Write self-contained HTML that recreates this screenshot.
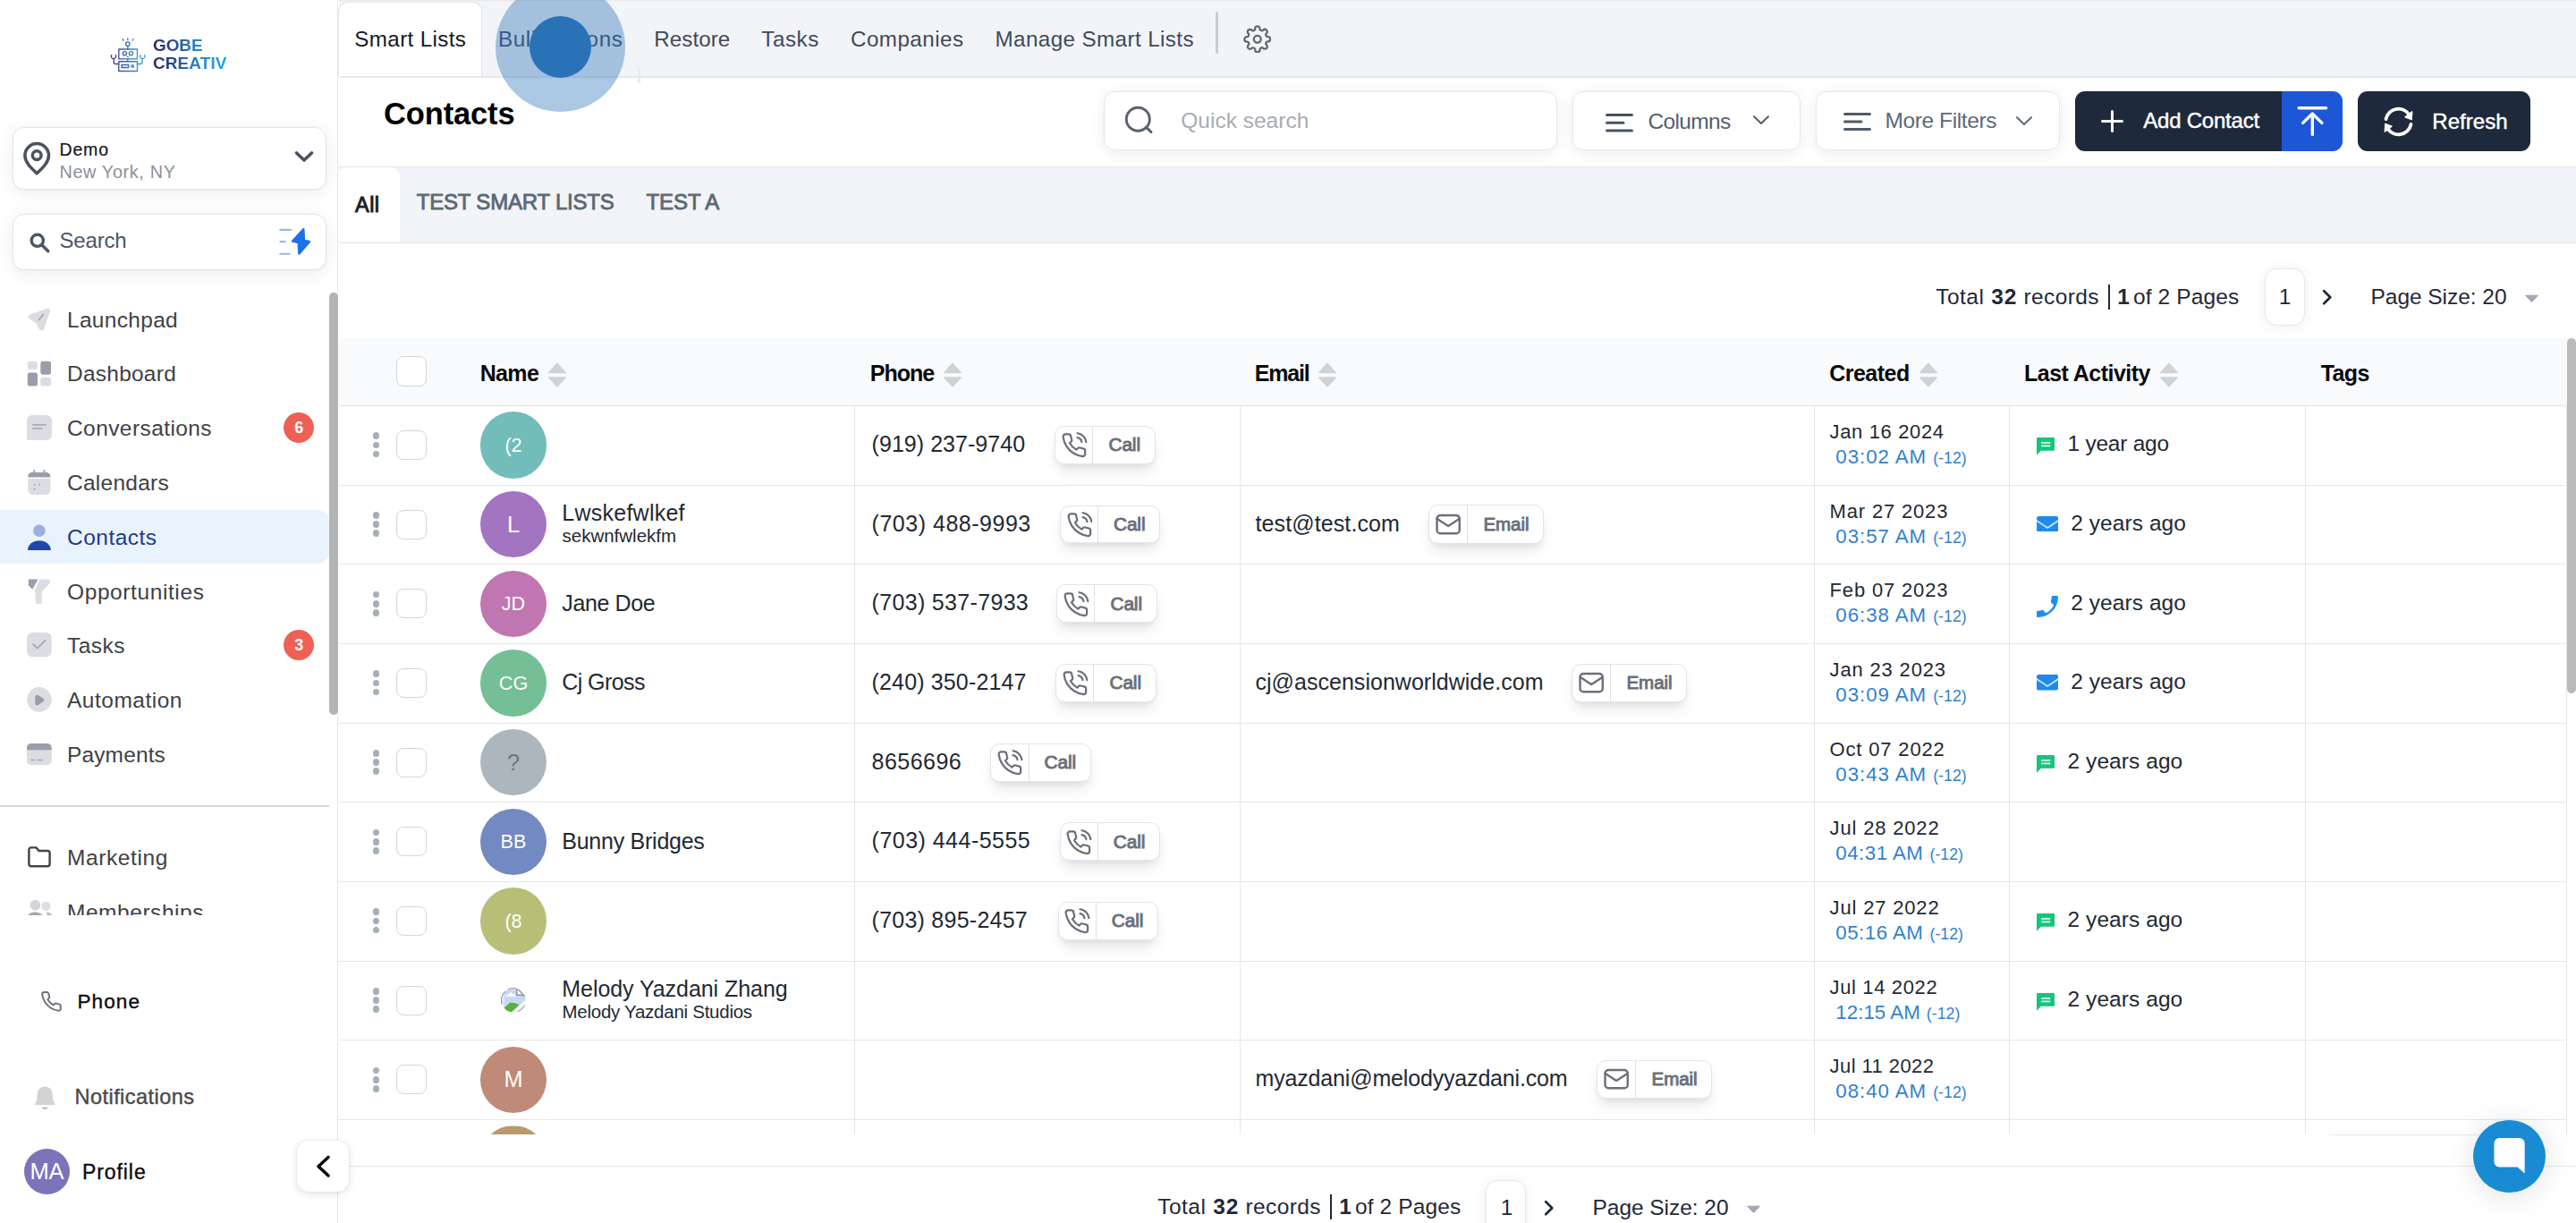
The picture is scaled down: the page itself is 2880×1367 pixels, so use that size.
<!DOCTYPE html>
<html lang="en"><head><meta charset="utf-8"><title>Contacts</title>
<style>
html,body{margin:0;padding:0;background:#fff}
#p{width:2880px;height:1367px;overflow:hidden;position:relative;background:#fff;font-family:'Liberation Sans', sans-serif}
#b div,#i svg,#t span{position:absolute}
#b div{box-sizing:border-box}
#t span{white-space:pre;line-height:1}
</style></head>
<body>
<div id="p">
<div id="b">
<div style="left:376.9px;top:0px;width:1.3px;height:1367px;background:#e6e7e9"></div>
<div style="left:13.9px;top:141.5px;width:351.2px;height:70.2px;background:#fff;border:1.5px solid #e4e6ea;border-radius:13px;box-shadow:0 3px 20px rgba(16,24,40,.075),0 1px 3px rgba(16,24,40,.04)"></div>
<div style="left:13.9px;top:239px;width:351.2px;height:63px;background:#fff;border:1.5px solid #e4e6ea;border-radius:13px;box-shadow:0 3px 20px rgba(16,24,40,.075),0 1px 3px rgba(16,24,40,.04)"></div>
<div style="left:-12px;top:570px;width:379.5px;height:60.2px;background:#e9f3fe;border-radius:13px"></div>
<div style="left:0px;top:900px;width:368px;height:1.5px;background:#d5d7db"></div>
<div style="left:368.3px;top:327px;width:9.4px;height:471.5px;background:#b4b4b4;border-radius:5px"></div>
<div style="left:317.2px;top:461.3px;width:34px;height:34px;background:#ee6055;border-radius:50%"></div>
<div style="left:317.2px;top:704.4px;width:34px;height:34px;background:#ee6055;border-radius:50%"></div>
<div style="left:26.8px;top:1283.7px;width:51.4px;height:51.4px;background:#7c74ba;border-radius:50%"></div>
<div style="left:378.5px;top:0px;width:2501.5px;height:86.5px;background:#f3f4f7;border-bottom:2px solid #e6e8ec;border-top:1.5px solid #e6e8ec"></div>
<div style="left:378.4px;top:1.5px;width:161px;height:83.5px;background:#fff;border-radius:11px 11px 0 0;border:1.2px solid #e4e6e9;border-bottom:none"></div>
<div style="left:1359px;top:13px;width:3px;height:47px;background:#c9cdd3;border-radius:1.5px"></div>
<div style="left:713px;top:76px;width:2.5px;height:17px;background:#e8eaee"></div>
<div style="left:378.5px;top:185.5px;width:2501.5px;height:86px;background:#f3f4f8;border-top:1.5px solid #e5e7eb;border-bottom:1.5px solid #e5e7eb"></div>
<div style="left:378.4px;top:187.3px;width:69px;height:82.7px;background:#fff;border-radius:11px 11px 0 0"></div>
<div style="left:1234.2px;top:101.8px;width:506.5px;height:66.5px;background:#fff;border:1.5px solid #e5e7eb;border-radius:12px;box-shadow:0 3px 16px rgba(16,24,40,.075)"></div>
<div style="left:1757.5px;top:101.8px;width:255.3px;height:66.5px;background:#fff;border:1.5px solid #e5e7eb;border-radius:12px;box-shadow:0 3px 16px rgba(16,24,40,.075)"></div>
<div style="left:2030.2px;top:101.8px;width:273px;height:66.5px;background:#fff;border:1.5px solid #e5e7eb;border-radius:12px;box-shadow:0 3px 16px rgba(16,24,40,.075)"></div>
<div style="left:2319.8px;top:101.6px;width:231.5px;height:67.4px;background:#1e293b;border-radius:11px 0 0 11px"></div>
<div style="left:2550.8px;top:101.6px;width:67.8px;height:67.4px;background:#1d57d8;border-radius:0 11px 11px 0"></div>
<div style="left:2636px;top:101.6px;width:193px;height:67.4px;background:#1e293b;border-radius:11px"></div>
<div style="left:2531.6px;top:300px;width:45.8px;height:63.5px;background:#fff;border:1.5px solid #e5e7eb;border-radius:13px;box-shadow:0 1px 14px rgba(16,24,40,.07)"></div>
<div style="left:1660.6px;top:1318.6px;width:45.8px;height:63.5px;background:#fff;border:1.5px solid #e5e7eb;border-radius:13px;box-shadow:0 1px 14px rgba(16,24,40,.07)"></div>
<div style="left:378.5px;top:378.3px;width:2491.5px;height:75.5px;background:#f9fafb;border-bottom:1.3px solid #e2e4e8"></div>
<div style="left:378.5px;top:542px;width:2491.5px;height:1px;background:#e4e6e9"></div>
<div style="left:378.5px;top:630px;width:2491.5px;height:1px;background:#e4e6e9"></div>
<div style="left:378.5px;top:719px;width:2491.5px;height:1px;background:#e4e6e9"></div>
<div style="left:378.5px;top:808px;width:2491.5px;height:1px;background:#e4e6e9"></div>
<div style="left:378.5px;top:896px;width:2491.5px;height:1px;background:#e4e6e9"></div>
<div style="left:378.5px;top:985px;width:2491.5px;height:1px;background:#e4e6e9"></div>
<div style="left:378.5px;top:1074px;width:2491.5px;height:1px;background:#e4e6e9"></div>
<div style="left:378.5px;top:1162px;width:2491.5px;height:1px;background:#e4e6e9"></div>
<div style="left:378.5px;top:1251px;width:2491.5px;height:1px;background:#e4e6e9"></div>
<div style="left:955px;top:454px;width:1px;height:815px;background:#e4e6e9"></div>
<div style="left:1386px;top:454px;width:1px;height:815px;background:#e4e6e9"></div>
<div style="left:2028px;top:454px;width:1px;height:815px;background:#e4e6e9"></div>
<div style="left:2246px;top:454px;width:1px;height:815px;background:#e4e6e9"></div>
<div style="left:2577px;top:454px;width:1px;height:815px;background:#e4e6e9"></div>
<div style="left:2869px;top:454px;width:1px;height:815px;background:#e4e6e9"></div>
<div style="left:443px;top:398px;width:34px;height:34px;background:#fff;border:1.5px solid #d3d6db;border-radius:8px"></div>
<div style="left:2870.4px;top:378px;width:9.6px;height:396.5px;background:#bababa;border-radius:5px 5px 5px 5px"></div>
<div style="left:416.7px;top:483.39px;width:7.6px;height:7.6px;background:#a3b0b7;border-radius:50%"></div>
<div style="left:416.7px;top:493.59px;width:7.6px;height:7.6px;background:#a3b0b7;border-radius:50%"></div>
<div style="left:416.7px;top:503.69px;width:7.6px;height:7.6px;background:#a3b0b7;border-radius:50%"></div>
<div style="left:443px;top:480.89px;width:33.8px;height:33px;background:#fff;border:1.5px solid #d3d6db;border-radius:8px"></div>
<div style="left:536.75px;top:460.29px;width:74.4px;height:74.4px;background:#72bcba;border-radius:50%"></div>
<div style="left:416.7px;top:572.07px;width:7.6px;height:7.6px;background:#a3b0b7;border-radius:50%"></div>
<div style="left:416.7px;top:582.27px;width:7.6px;height:7.6px;background:#a3b0b7;border-radius:50%"></div>
<div style="left:416.7px;top:592.37px;width:7.6px;height:7.6px;background:#a3b0b7;border-radius:50%"></div>
<div style="left:443px;top:569.5699999999999px;width:33.8px;height:33px;background:#fff;border:1.5px solid #d3d6db;border-radius:8px"></div>
<div style="left:536.75px;top:548.9699999999999px;width:74.4px;height:74.4px;background:#a374bf;border-radius:50%"></div>
<div style="left:416.7px;top:660.7500000000001px;width:7.6px;height:7.6px;background:#a3b0b7;border-radius:50%"></div>
<div style="left:416.7px;top:670.95px;width:7.6px;height:7.6px;background:#a3b0b7;border-radius:50%"></div>
<div style="left:416.7px;top:681.0500000000001px;width:7.6px;height:7.6px;background:#a3b0b7;border-radius:50%"></div>
<div style="left:443px;top:658.25px;width:33.8px;height:33px;background:#fff;border:1.5px solid #d3d6db;border-radius:8px"></div>
<div style="left:536.75px;top:637.65px;width:74.4px;height:74.4px;background:#c076b1;border-radius:50%"></div>
<div style="left:416.7px;top:749.4300000000002px;width:7.6px;height:7.6px;background:#a3b0b7;border-radius:50%"></div>
<div style="left:416.7px;top:759.6300000000001px;width:7.6px;height:7.6px;background:#a3b0b7;border-radius:50%"></div>
<div style="left:416.7px;top:769.7300000000001px;width:7.6px;height:7.6px;background:#a3b0b7;border-radius:50%"></div>
<div style="left:443px;top:746.9300000000001px;width:33.8px;height:33px;background:#fff;border:1.5px solid #d3d6db;border-radius:8px"></div>
<div style="left:536.75px;top:726.33px;width:74.4px;height:74.4px;background:#74bf95;border-radius:50%"></div>
<div style="left:416.7px;top:838.1100000000001px;width:7.6px;height:7.6px;background:#a3b0b7;border-radius:50%"></div>
<div style="left:416.7px;top:848.3100000000001px;width:7.6px;height:7.6px;background:#a3b0b7;border-radius:50%"></div>
<div style="left:416.7px;top:858.4100000000001px;width:7.6px;height:7.6px;background:#a3b0b7;border-radius:50%"></div>
<div style="left:443px;top:835.61px;width:33.8px;height:33px;background:#fff;border:1.5px solid #d3d6db;border-radius:8px"></div>
<div style="left:536.75px;top:815.01px;width:74.4px;height:74.4px;background:#adb5bd;border-radius:50%"></div>
<div style="left:416.7px;top:926.7900000000001px;width:7.6px;height:7.6px;background:#a3b0b7;border-radius:50%"></div>
<div style="left:416.7px;top:936.99px;width:7.6px;height:7.6px;background:#a3b0b7;border-radius:50%"></div>
<div style="left:416.7px;top:947.09px;width:7.6px;height:7.6px;background:#a3b0b7;border-radius:50%"></div>
<div style="left:443px;top:924.29px;width:33.8px;height:33px;background:#fff;border:1.5px solid #d3d6db;border-radius:8px"></div>
<div style="left:536.75px;top:903.6899999999999px;width:74.4px;height:74.4px;background:#7389c1;border-radius:50%"></div>
<div style="left:416.7px;top:1015.47px;width:7.6px;height:7.6px;background:#a3b0b7;border-radius:50%"></div>
<div style="left:416.7px;top:1025.67px;width:7.6px;height:7.6px;background:#a3b0b7;border-radius:50%"></div>
<div style="left:416.7px;top:1035.77px;width:7.6px;height:7.6px;background:#a3b0b7;border-radius:50%"></div>
<div style="left:443px;top:1012.9699999999999px;width:33.8px;height:33px;background:#fff;border:1.5px solid #d3d6db;border-radius:8px"></div>
<div style="left:536.75px;top:992.3699999999999px;width:74.4px;height:74.4px;background:#b7bf77;border-radius:50%"></div>
<div style="left:416.7px;top:1104.1499999999999px;width:7.6px;height:7.6px;background:#a3b0b7;border-radius:50%"></div>
<div style="left:416.7px;top:1114.35px;width:7.6px;height:7.6px;background:#a3b0b7;border-radius:50%"></div>
<div style="left:416.7px;top:1124.4499999999998px;width:7.6px;height:7.6px;background:#a3b0b7;border-radius:50%"></div>
<div style="left:443px;top:1101.6499999999999px;width:33.8px;height:33px;background:#fff;border:1.5px solid #d3d6db;border-radius:8px"></div>
<div style="left:416.7px;top:1192.8300000000002px;width:7.6px;height:7.6px;background:#a3b0b7;border-radius:50%"></div>
<div style="left:416.7px;top:1203.0300000000002px;width:7.6px;height:7.6px;background:#a3b0b7;border-radius:50%"></div>
<div style="left:416.7px;top:1213.13px;width:7.6px;height:7.6px;background:#a3b0b7;border-radius:50%"></div>
<div style="left:443px;top:1190.3300000000002px;width:33.8px;height:33px;background:#fff;border:1.5px solid #d3d6db;border-radius:8px"></div>
<div style="left:536.75px;top:1169.73px;width:74.4px;height:74.4px;background:#c08a78;border-radius:50%"></div>
<div style="left:536.75px;top:1258.4099999999999px;width:74.4px;height:74.4px;background:#b99a6b;border-radius:50%;clip-path:inset(0 0 64.5px 0)"></div>
<div style="left:1179.2px;top:475.99px;width:112.6px;height:42.8px;background:#fff;border:1.5px solid #e3e4e8;border-radius:10.5px;box-shadow:0 10px 15px -3px rgba(0,0,0,.105),0 4px 6px -2px rgba(0,0,0,.05)"></div>
<div style="left:1221.4px;top:476.99px;width:1.1px;height:41px;background:#e0e1e5"></div>
<div style="left:1184.7px;top:564.67px;width:112.6px;height:42.8px;background:#fff;border:1.5px solid #e3e4e8;border-radius:10.5px;box-shadow:0 10px 15px -3px rgba(0,0,0,.105),0 4px 6px -2px rgba(0,0,0,.05)"></div>
<div style="left:1226.9px;top:565.67px;width:1.1px;height:41px;background:#e0e1e5"></div>
<div style="left:1181.2px;top:653.35px;width:112.6px;height:42.8px;background:#fff;border:1.5px solid #e3e4e8;border-radius:10.5px;box-shadow:0 10px 15px -3px rgba(0,0,0,.105),0 4px 6px -2px rgba(0,0,0,.05)"></div>
<div style="left:1223.4px;top:654.35px;width:1.1px;height:41px;background:#e0e1e5"></div>
<div style="left:1180.2px;top:742.0300000000001px;width:112.6px;height:42.8px;background:#fff;border:1.5px solid #e3e4e8;border-radius:10.5px;box-shadow:0 10px 15px -3px rgba(0,0,0,.105),0 4px 6px -2px rgba(0,0,0,.05)"></div>
<div style="left:1222.4px;top:743.0300000000001px;width:1.1px;height:41px;background:#e0e1e5"></div>
<div style="left:1107.3px;top:830.71px;width:112.6px;height:42.8px;background:#fff;border:1.5px solid #e3e4e8;border-radius:10.5px;box-shadow:0 10px 15px -3px rgba(0,0,0,.105),0 4px 6px -2px rgba(0,0,0,.05)"></div>
<div style="left:1149.5px;top:831.71px;width:1.1px;height:41px;background:#e0e1e5"></div>
<div style="left:1184.5px;top:919.39px;width:112.6px;height:42.8px;background:#fff;border:1.5px solid #e3e4e8;border-radius:10.5px;box-shadow:0 10px 15px -3px rgba(0,0,0,.105),0 4px 6px -2px rgba(0,0,0,.05)"></div>
<div style="left:1226.7px;top:920.39px;width:1.1px;height:41px;background:#e0e1e5"></div>
<div style="left:1182.5px;top:1008.0699999999999px;width:112.6px;height:42.8px;background:#fff;border:1.5px solid #e3e4e8;border-radius:10.5px;box-shadow:0 10px 15px -3px rgba(0,0,0,.105),0 4px 6px -2px rgba(0,0,0,.05)"></div>
<div style="left:1224.7px;top:1009.0699999999999px;width:1.1px;height:41px;background:#e0e1e5"></div>
<div style="left:1597.1px;top:564.17px;width:128.6px;height:43.4px;background:#fff;border:1.5px solid #e3e4e8;border-radius:10.5px;box-shadow:0 10px 15px -3px rgba(0,0,0,.105),0 4px 6px -2px rgba(0,0,0,.05)"></div>
<div style="left:1639.9px;top:565.17px;width:1.1px;height:41.5px;background:#e0e1e5"></div>
<div style="left:1757.1999999999998px;top:741.5300000000001px;width:128.6px;height:43.4px;background:#fff;border:1.5px solid #e3e4e8;border-radius:10.5px;box-shadow:0 10px 15px -3px rgba(0,0,0,.105),0 4px 6px -2px rgba(0,0,0,.05)"></div>
<div style="left:1800.0px;top:742.5300000000001px;width:1.1px;height:41.5px;background:#e0e1e5"></div>
<div style="left:1785.3px;top:1184.93px;width:128.6px;height:43.4px;background:#fff;border:1.5px solid #e3e4e8;border-radius:10.5px;box-shadow:0 10px 15px -3px rgba(0,0,0,.105),0 4px 6px -2px rgba(0,0,0,.05)"></div>
<div style="left:1828.1000000000001px;top:1185.93px;width:1.1px;height:41.5px;background:#e0e1e5"></div>
<div style="left:2357px;top:317.5px;width:1.8px;height:28px;background:#1f2937"></div>
<div style="left:1487px;top:1335.3px;width:1.8px;height:28px;background:#1f2937"></div>
</div>
<div id="i">
<svg style="left:122px;top:40px;" width="42" height="42" viewBox="0 0 42 42" fill="none"><defs><linearGradient id="lg" gradientUnits="userSpaceOnUse" x1="2" y1="0" x2="40" y2="0"><stop offset="0" stop-color="#3d3787"/><stop offset="0.5" stop-color="#3b6fb5"/><stop offset="1" stop-color="#38a8dc"/></linearGradient></defs>
<g stroke="url(#lg)" stroke-width="1.350" fill="none" stroke-linecap="round" stroke-linejoin="round">
<rect x="10.800" y="15" width="20.700" height="10.900"/><rect x="10.800" y="28.700" width="20.700" height="10.800"/>
<circle cx="17.500" cy="19.700" r="2.100"/><circle cx="24.500" cy="19.700" r="2.100"/><path d="M20.300 23.300h1"/>
<path d="M20.800 25.900v2.800"/><circle cx="20.800" cy="9.100" r="2.200"/><path d="M20.800 11.300v3.700"/>
<path d="M20.800 3v1.600"/><path d="M15.300 3.800l.7 1.400"/><path d="M26.900 3.800l-.7 1.400"/>
<rect x="14" y="32.500" width="7.700" height="3"/><circle cx="26.200" cy="34" r="1.350"/>
<path d="M10.800 31.500H7.300a2 2 0 0 1-2-2V26"/><path d="M2.700 21.600a2.650 2.650 0 1 0 4.600 0"/>
<path d="M31.500 31.500H35a2 2 0 0 0 2-2V26"/><path d="M35 21.600a2.650 2.650 0 1 0 4.600 0"/></g></svg>
<svg style="left:24px;top:157px;" width="34.5" height="41" viewBox="0 0 34.5 41" fill="none"><g stroke="#4b515e" stroke-width="3.500" fill="none" stroke-linejoin="round"><path d="M17.200 36.800C10 30 3.900 24.300 3.900 16.800a13.300 13.300 0 0 1 26.600 0c0 7.500-6.100 13.200-13.300 20z"/><circle cx="17.200" cy="16.600" r="4.900"/></g></svg>
<svg style="left:328px;top:167px;" width="24" height="16" viewBox="0 0 24 16" fill="none"><polyline points="3.5,4 12,12 20.500,4" stroke="#4b5260" stroke-width="3.6" fill="none" stroke-linecap="round" stroke-linejoin="round"/></svg>
<svg style="left:32px;top:258.5px;" width="26" height="26" viewBox="0 0 26 26" fill="none"><g stroke="#4b5563" stroke-width="3.4" fill="none" stroke-linecap="round"><circle cx="9.8" cy="9.8" r="6.6"/><line x1="15" y1="15" x2="21.8" y2="21.8"/></g></svg>
<svg style="left:310px;top:252px;" width="42" height="36" viewBox="0 0 42 36" fill="none"><g stroke="#9db6e6" stroke-width="2.100" stroke-linecap="round"><line x1="3.300" y1="4.900" x2="15.200" y2="4.900"/><line x1="3.300" y1="18.100" x2="8.700" y2="18.100"/><line x1="3.300" y1="31.800" x2="13.500" y2="31.800"/></g><path d="M29.200 4.400 17.200 17.600 23.700 19 24.500 31.500 35.800 18.100 29.900 17z" fill="#1a73e8" stroke="#1a73e8" stroke-width="2.600" stroke-linejoin="round"/></svg>
<svg style="left:30px;top:342.6px;" width="28" height="29" viewBox="0 0 28 29" fill="none"><path d="M4.300 11.300 23.300 4.300 16.600 23.800 12.300 16.200z" fill="#dcdde1" stroke="#dcdde1" stroke-width="5.400" stroke-linejoin="round"/><line x1="13.600" y1="14.400" x2="18.300" y2="8.300" stroke="#a4a7b3" stroke-width="1.700" stroke-linecap="round"/></svg>
<svg style="left:30px;top:403.40000000000003px;" width="28" height="29" viewBox="0 0 28 29" fill="none"><rect x="0.800" y="1" width="11" height="9" rx="2.200" fill="#dcdde2"/><rect x="15.300" y="0.700" width="11.700" height="15" rx="2.400" fill="#9a9dab"/><rect x="0.800" y="13.500" width="11.200" height="15.100" rx="2.400" fill="#9a9dab"/><rect x="15.300" y="18.900" width="11.700" height="9.700" rx="2.200" fill="#dcdde2"/></svg>
<svg style="left:30px;top:464.20000000000005px;" width="28" height="29" viewBox="0 0 28 29" fill="none"><path d="M5.800 0h16.400a5.800 5.800 0 0 1 5.800 5.800v16.400a5.800 5.800 0 0 1-5.800 5.800h-22.400v-22.200a5.800 5.800 0 0 1 5.800-5.800z" fill="#dcdde2"/><line x1="7" y1="10.800" x2="21.300" y2="10.800" stroke="#a9acb8" stroke-width="1.700" stroke-linecap="round"/><line x1="7" y1="14.900" x2="16.800" y2="14.900" stroke="#a9acb8" stroke-width="1.700" stroke-linecap="round"/></svg>
<svg style="left:30px;top:525.0px;" width="28" height="29" viewBox="0 0 28 29" fill="none"><path d="M1.300 9.900h25v13a5.100 5.100 0 0 1-5.100 5.100h-14.800a5.100 5.100 0 0 1-5.100-5.100z" fill="#dcdde2"/><path d="M5.800 3h16a4.500 4.500 0 0 1 4.500 4.500v0.900h-25v-0.900a4.500 4.500 0 0 1 4.500-4.500z" fill="#9a9dab"/><line x1="8.200" y1="0" x2="8.200" y2="4" stroke="#9a9dab" stroke-width="1.700" stroke-linecap="round"/><line x1="19.500" y1="0" x2="19.500" y2="4" stroke="#9a9dab" stroke-width="1.700" stroke-linecap="round"/><circle cx="8.600" cy="16.800" r="1.050" fill="#a9acb8"/><circle cx="14" cy="16.800" r="1.050" fill="#a9acb8"/><circle cx="8.600" cy="21.900" r="1.050" fill="#a9acb8"/></svg>
<svg style="left:30px;top:585.8px;" width="28" height="29" viewBox="0 0 28 29" fill="none"><circle cx="13.950" cy="7.200" r="6.750" fill="#9bb0dc"/><path d="M1 28.900A12.900 10.700 0 0 1 26.800 28.900z" fill="#2046a8"/></svg>
<svg style="left:30px;top:646.6px;" width="28" height="29" viewBox="0 0 28 29" fill="none"><path d="M14.600 0.500h9.400a2 2 0 0 1 2 2v1.300a2 2 0 0 1-.5 1.300l-8.800 9.700v11.100a2 2 0 0 1-2 2h-3.100a2 2 0 0 1-2-2v-10.900l-1.300-1.600z" fill="#dcdde2"/><path d="M1.800 0.500h10.900l-6.500 11.300-4.400-4.500z" fill="#9a9dab"/></svg>
<svg style="left:30px;top:707.4px;" width="28" height="29" viewBox="0 0 28 29" fill="none"><rect x="0.100" y="0.100" width="27.600" height="27.200" rx="6" fill="#dcdde2"/><polyline points="7.200,13.200 11.800,17.700 20.400,8.900" stroke="#a5a8b3" stroke-width="1.800" fill="none" stroke-linecap="round" stroke-linejoin="round"/></svg>
<svg style="left:30px;top:768.2px;" width="28" height="29" viewBox="0 0 28 29" fill="none"><circle cx="13.900" cy="13.900" r="13.800" fill="#dcdde2"/><path d="M11.500 11v7l5.500-3.500z" fill="#9a9dab" stroke="#9a9dab" stroke-width="4.500" stroke-linejoin="round"/></svg>
<svg style="left:30px;top:829.0px;" width="28" height="29" viewBox="0 0 28 29" fill="none"><path d="M-0.200 9.400h28v11.500a5 5 0 0 1-5 5h-18a5 5 0 0 1-5-5z" fill="#dcdde2"/><path d="M4.800 2.100h18a5 5 0 0 1 5 5v2.300h-28v-2.300a5 5 0 0 1 5-5z" fill="#9a9dab"/><line x1="4.800" y1="20.400" x2="8.300" y2="20.400" stroke="#a9acb8" stroke-width="1.500" stroke-linecap="round"/><line x1="11.400" y1="20.400" x2="17.600" y2="20.400" stroke="#a9acb8" stroke-width="1.500" stroke-linecap="round"/></svg>
<svg style="left:29.8px;top:945.4px;" width="27.5" height="25.6" viewBox="0 0 29 27" fill="none"><path d="M2.500 5a2.500 2.500 0 0 1 2.500-2.500h6l3.200 3.800h10.300a2.500 2.500 0 0 1 2.500 2.500v13.200a2.500 2.500 0 0 1-2.500 2.500h-19.500a2.500 2.500 0 0 1-2.500-2.500z" stroke="#434447" stroke-width="2.550" fill="none" stroke-linejoin="round"/></svg>
<svg style="left:30px;top:1004px;" width="30" height="28" viewBox="0 0 30 28" fill="none"><circle cx="21.500" cy="8.900" r="5.200" fill="#dddee2"/><circle cx="9.400" cy="7.700" r="6.500" fill="#d3d4d9" stroke="#fff" stroke-width="1.200"/><path d="M22 15.500c4.500.300 7.500 3 7.500 9h-6.500c0-4-.500-7-1-9z" fill="#b9bbc2"/><path d="M-1 26c0-7 4.500-10.500 10.400-10.500s10.400 3.500 10.400 10.500z" fill="#a3a6ae"/></svg>
<svg style="left:44.5px;top:1107.3px;" width="24.8" height="24.8" viewBox="0 0 24 24" fill="none"><g stroke="#6b7079" stroke-width="1.9" stroke-linecap="round" stroke-linejoin="round" fill="none"><path d="M22 16.92v3a2 2 0 0 1-2.18 2 19.79 19.79 0 0 1-8.63-3.07 19.5 19.5 0 0 1-6-6 19.79 19.79 0 0 1-3.07-8.67A2 2 0 0 1 4.11 2h3a2 2 0 0 1 2 1.72 12.84 12.84 0 0 0 .7 2.81 2 2 0 0 1-.45 2.11L8.09 9.91a16 16 0 0 0 6 6l1.27-1.27a2 2 0 0 1 2.11-.45 12.84 12.84 0 0 0 2.81.7A2 2 0 0 1 22 16.92z"/></g></svg>
<svg style="left:38px;top:1212.5px;" width="24.5" height="30" viewBox="0 0 24.500 30" fill="none"><path d="M12.200 1.500c-5 0-8.500 3.800-8.500 9 0 7-2.700 9.500-2.700 11.500h22.400c0-2-2.700-4.500-2.700-11.500 0-5.200-3.500-9-8.500-9z" fill="#d3d3d3"/><path d="M8.700 24.500a3.600 3.600 0 0 0 7 0z" fill="#c4c4c4"/></svg>
<svg style="left:1389.6px;top:27.6px;" width="31.6" height="31.6" viewBox="0 0 24 24" fill="none"><g stroke="#66676a" stroke-width="1.75" stroke-linecap="round" stroke-linejoin="round" fill="none"><circle cx="12" cy="12" r="3"/><path d="M19.4 15a1.65 1.65 0 0 0 .33 1.82l.06.06a2 2 0 0 1 0 2.83 2 2 0 0 1-2.83 0l-.06-.06a1.65 1.65 0 0 0-1.82-.33 1.65 1.65 0 0 0-1 1.51V21a2 2 0 0 1-2 2 2 2 0 0 1-2-2v-.09A1.65 1.65 0 0 0 9 19.4a1.65 1.65 0 0 0-1.82.33l-.06.06a2 2 0 0 1-2.83 0 2 2 0 0 1 0-2.83l.06-.06a1.65 1.65 0 0 0 .33-1.82 1.65 1.65 0 0 0-1.51-1H3a2 2 0 0 1-2-2 2 2 0 0 1 2-2h.09A1.65 1.65 0 0 0 4.6 9a1.65 1.65 0 0 0-.33-1.82l-.06-.06a2 2 0 0 1 0-2.83 2 2 0 0 1 2.83 0l.06.06a1.65 1.65 0 0 0 1.82.33H9a1.65 1.65 0 0 0 1-1.51V3a2 2 0 0 1 2-2 2 2 0 0 1 2 2v.09a1.65 1.65 0 0 0 1 1.51 1.65 1.65 0 0 0 1.82-.33l.06-.06a2 2 0 0 1 2.83 0 2 2 0 0 1 0 2.83l-.06.06a1.65 1.65 0 0 0-.33 1.82V9a1.65 1.65 0 0 0 1.51 1H21a2 2 0 0 1 2 2 2 2 0 0 1-2 2h-.09a1.65 1.65 0 0 0-1.51 1z"/></g></svg>
<svg style="left:1255px;top:116px;" width="37" height="37" viewBox="0 0 37 37" fill="none"><g stroke="#5b616e" stroke-width="2.900" fill="none" stroke-linecap="round"><circle cx="17.300" cy="17.200" r="13"/><line x1="26.800" y1="26.600" x2="32" y2="31.600"/></g></svg>
<svg style="left:1795px;top:125.3px;" width="31" height="24.5" viewBox="0 0 31 24.5" fill="none"><g stroke="#4b5260" stroke-width="3" stroke-linecap="round"><line x1="1.500" y1="3.500" x2="29.5" y2="3.500"/><line x1="1.500" y1="12.25" x2="19.84" y2="12.25"/><line x1="1.500" y1="21.0" x2="29.5" y2="21.0"/></g></svg>
<svg style="left:2060.5px;top:123.7px;" width="31" height="24" viewBox="0 0 31 24" fill="none"><g stroke="#525a68" stroke-width="3" stroke-linecap="round"><line x1="1.500" y1="3.500" x2="29.5" y2="3.500"/><line x1="1.500" y1="12.0" x2="19.84" y2="12.0"/><line x1="1.500" y1="20.5" x2="29.5" y2="20.5"/></g></svg>
<svg style="left:1957.5px;top:127.30000000000001px;" width="22" height="14" viewBox="0 0 22 14" fill="none"><polyline points="3,3.200 11,11 19,3.200" stroke="#5a6270" stroke-width="2.100" fill="none" stroke-linecap="round" stroke-linejoin="round"/></svg>
<svg style="left:2251.5px;top:127.80000000000001px;" width="22" height="14" viewBox="0 0 22 14" fill="none"><polyline points="3,3.200 11,11 19,3.200" stroke="#636c7b" stroke-width="2.100" fill="none" stroke-linecap="round" stroke-linejoin="round"/></svg>
<svg style="left:2348px;top:121.5px;" width="27" height="27" viewBox="0 0 27 27" fill="none"><g stroke="#fff" stroke-width="3" stroke-linecap="round"><line x1="13.500" y1="2.500" x2="13.500" y2="24.500"/><line x1="2.500" y1="13.500" x2="24.500" y2="13.500"/></g></svg>
<svg style="left:2565.5px;top:116.5px;" width="38" height="38" viewBox="0 0 38 38" fill="none"><g stroke="#fff" stroke-width="3.400" stroke-linecap="round" stroke-linejoin="round" fill="none"><line x1="4.200" y1="3.800" x2="34.600" y2="3.800"/><line x1="19.300" y1="33.400" x2="19.300" y2="11.500"/><polyline points="8.700,20.400 19.300,10 29.900,20.400"/></g></svg>
<svg style="left:2662.5px;top:117.5px;" width="37" height="37" viewBox="0 0 37 37" fill="none"><g stroke="#fff" stroke-width="3.800" stroke-linecap="round" fill="none"><path d="M4.500 15.200A14.200 14.200 0 0 1 31 11.200"/><path d="M32.500 20.800A14.200 14.200 0 0 1 6 24.800"/></g><path d="M33.700 6.900 33.200 15.500 26 12.900z" fill="#fff" stroke="#fff" stroke-width="1.400" stroke-linejoin="round"/><path d="M3.300 29.100 3.800 20.500 11 23.100z" fill="#fff" stroke="#fff" stroke-width="1.400" stroke-linejoin="round"/></svg>
<svg style="left:2593.5px;top:321px;" width="16" height="22" viewBox="0 0 16 22" fill="none"><polyline points="4.200,4.200 11.300,11.200 4.200,18.200" stroke="#1f2937" stroke-width="2.700" fill="none" stroke-linecap="round" stroke-linejoin="round"/></svg>
<svg style="left:2822px;top:329px;" width="17" height="10" viewBox="0 0 17 10" fill="none"><path d="M1.500 1.200h14l-7 7.300z" fill="#a3a9b3" stroke="#a3a9b3" stroke-width="1" stroke-linejoin="round"/></svg>
<svg style="left:1723.5px;top:1338.8px;" width="16" height="22" viewBox="0 0 16 22" fill="none"><polyline points="4.200,4.200 11.300,11.200 4.200,18.200" stroke="#1f2937" stroke-width="2.700" fill="none" stroke-linecap="round" stroke-linejoin="round"/></svg>
<svg style="left:1952px;top:1346.8px;" width="17" height="10" viewBox="0 0 17 10" fill="none"><path d="M1.500 1.200h14l-7 7.300z" fill="#a3a9b3" stroke="#a3a9b3" stroke-width="1" stroke-linejoin="round"/></svg>
<svg style="left:613.2px;top:404.5px;" width="20" height="29" viewBox="0 0 20 29" fill="none"><path d="M10 1.400 19.100 11.500h-18.200z" fill="#d1d2d4" stroke="#d1d2d4" stroke-width="1.700" stroke-linejoin="round"/><path d="M10 26.700 19.100 17h-18.200z" fill="#d1d2d4" stroke="#d1d2d4" stroke-width="1.700" stroke-linejoin="round"/></svg>
<svg style="left:1055.2px;top:404.5px;" width="20" height="29" viewBox="0 0 20 29" fill="none"><path d="M10 1.400 19.100 11.500h-18.200z" fill="#d1d2d4" stroke="#d1d2d4" stroke-width="1.700" stroke-linejoin="round"/><path d="M10 26.700 19.100 17h-18.200z" fill="#d1d2d4" stroke="#d1d2d4" stroke-width="1.700" stroke-linejoin="round"/></svg>
<svg style="left:1473.95px;top:404.5px;" width="20" height="29" viewBox="0 0 20 29" fill="none"><path d="M10 1.400 19.100 11.500h-18.200z" fill="#d1d2d4" stroke="#d1d2d4" stroke-width="1.700" stroke-linejoin="round"/><path d="M10 26.700 19.100 17h-18.200z" fill="#d1d2d4" stroke="#d1d2d4" stroke-width="1.700" stroke-linejoin="round"/></svg>
<svg style="left:2145.7px;top:404.5px;" width="20" height="29" viewBox="0 0 20 29" fill="none"><path d="M10 1.400 19.100 11.500h-18.200z" fill="#d1d2d4" stroke="#d1d2d4" stroke-width="1.700" stroke-linejoin="round"/><path d="M10 26.700 19.100 17h-18.200z" fill="#d1d2d4" stroke="#d1d2d4" stroke-width="1.700" stroke-linejoin="round"/></svg>
<svg style="left:2414.7px;top:404.5px;" width="20" height="29" viewBox="0 0 20 29" fill="none"><path d="M10 1.400 19.100 11.500h-18.200z" fill="#d1d2d4" stroke="#d1d2d4" stroke-width="1.700" stroke-linejoin="round"/><path d="M10 26.700 19.100 17h-18.200z" fill="#d1d2d4" stroke="#d1d2d4" stroke-width="1.700" stroke-linejoin="round"/></svg>
<svg style="left:1186px;top:483.29px;" width="29.6" height="29.6" viewBox="0 0 24 24" fill="none"><g stroke="#6b6f7b" stroke-width="1.8" stroke-linecap="round" stroke-linejoin="round" fill="none"><path d="M22 16.92v3a2 2 0 0 1-2.18 2 19.79 19.79 0 0 1-8.63-3.07 19.5 19.5 0 0 1-6-6 19.79 19.79 0 0 1-3.07-8.67A2 2 0 0 1 4.11 2h3a2 2 0 0 1 2 1.72 12.84 12.84 0 0 0 .7 2.81 2 2 0 0 1-.45 2.11L8.09 9.91a16 16 0 0 0 6 6l1.27-1.27a2 2 0 0 1 2.11-.45 12.84 12.84 0 0 0 2.81.7A2 2 0 0 1 22 16.92z"/><path d="M15.05 5A5 5 0 0 1 19 8.95M15.05 1A9 9 0 0 1 23 8.94"/></g></svg>
<svg style="left:1191.5px;top:571.9699999999999px;" width="29.6" height="29.6" viewBox="0 0 24 24" fill="none"><g stroke="#6b6f7b" stroke-width="1.8" stroke-linecap="round" stroke-linejoin="round" fill="none"><path d="M22 16.92v3a2 2 0 0 1-2.18 2 19.79 19.79 0 0 1-8.63-3.07 19.5 19.5 0 0 1-6-6 19.79 19.79 0 0 1-3.07-8.67A2 2 0 0 1 4.11 2h3a2 2 0 0 1 2 1.72 12.84 12.84 0 0 0 .7 2.81 2 2 0 0 1-.45 2.11L8.09 9.91a16 16 0 0 0 6 6l1.27-1.27a2 2 0 0 1 2.11-.45 12.84 12.84 0 0 0 2.81.7A2 2 0 0 1 22 16.92z"/><path d="M15.05 5A5 5 0 0 1 19 8.95M15.05 1A9 9 0 0 1 23 8.94"/></g></svg>
<svg style="left:1188px;top:660.65px;" width="29.6" height="29.6" viewBox="0 0 24 24" fill="none"><g stroke="#6b6f7b" stroke-width="1.8" stroke-linecap="round" stroke-linejoin="round" fill="none"><path d="M22 16.92v3a2 2 0 0 1-2.18 2 19.79 19.79 0 0 1-8.63-3.07 19.5 19.5 0 0 1-6-6 19.79 19.79 0 0 1-3.07-8.67A2 2 0 0 1 4.11 2h3a2 2 0 0 1 2 1.72 12.84 12.84 0 0 0 .7 2.81 2 2 0 0 1-.45 2.11L8.09 9.91a16 16 0 0 0 6 6l1.27-1.27a2 2 0 0 1 2.11-.45 12.84 12.84 0 0 0 2.81.7A2 2 0 0 1 22 16.92z"/><path d="M15.05 5A5 5 0 0 1 19 8.95M15.05 1A9 9 0 0 1 23 8.94"/></g></svg>
<svg style="left:1187px;top:749.33px;" width="29.6" height="29.6" viewBox="0 0 24 24" fill="none"><g stroke="#6b6f7b" stroke-width="1.8" stroke-linecap="round" stroke-linejoin="round" fill="none"><path d="M22 16.92v3a2 2 0 0 1-2.18 2 19.79 19.79 0 0 1-8.63-3.07 19.5 19.5 0 0 1-6-6 19.79 19.79 0 0 1-3.07-8.67A2 2 0 0 1 4.11 2h3a2 2 0 0 1 2 1.72 12.84 12.84 0 0 0 .7 2.81 2 2 0 0 1-.45 2.11L8.09 9.91a16 16 0 0 0 6 6l1.27-1.27a2 2 0 0 1 2.11-.45 12.84 12.84 0 0 0 2.81.7A2 2 0 0 1 22 16.92z"/><path d="M15.05 5A5 5 0 0 1 19 8.95M15.05 1A9 9 0 0 1 23 8.94"/></g></svg>
<svg style="left:1114.1px;top:838.01px;" width="29.6" height="29.6" viewBox="0 0 24 24" fill="none"><g stroke="#6b6f7b" stroke-width="1.8" stroke-linecap="round" stroke-linejoin="round" fill="none"><path d="M22 16.92v3a2 2 0 0 1-2.18 2 19.79 19.79 0 0 1-8.63-3.07 19.5 19.5 0 0 1-6-6 19.79 19.79 0 0 1-3.07-8.67A2 2 0 0 1 4.11 2h3a2 2 0 0 1 2 1.72 12.84 12.84 0 0 0 .7 2.81 2 2 0 0 1-.45 2.11L8.09 9.91a16 16 0 0 0 6 6l1.27-1.27a2 2 0 0 1 2.11-.45 12.84 12.84 0 0 0 2.81.7A2 2 0 0 1 22 16.92z"/><path d="M15.05 5A5 5 0 0 1 19 8.95M15.05 1A9 9 0 0 1 23 8.94"/></g></svg>
<svg style="left:1191.3px;top:926.6899999999999px;" width="29.6" height="29.6" viewBox="0 0 24 24" fill="none"><g stroke="#6b6f7b" stroke-width="1.8" stroke-linecap="round" stroke-linejoin="round" fill="none"><path d="M22 16.92v3a2 2 0 0 1-2.18 2 19.79 19.79 0 0 1-8.63-3.07 19.5 19.5 0 0 1-6-6 19.79 19.79 0 0 1-3.07-8.67A2 2 0 0 1 4.11 2h3a2 2 0 0 1 2 1.72 12.84 12.84 0 0 0 .7 2.81 2 2 0 0 1-.45 2.11L8.09 9.91a16 16 0 0 0 6 6l1.27-1.27a2 2 0 0 1 2.11-.45 12.84 12.84 0 0 0 2.81.7A2 2 0 0 1 22 16.92z"/><path d="M15.05 5A5 5 0 0 1 19 8.95M15.05 1A9 9 0 0 1 23 8.94"/></g></svg>
<svg style="left:1189.3px;top:1015.3699999999999px;" width="29.6" height="29.6" viewBox="0 0 24 24" fill="none"><g stroke="#6b6f7b" stroke-width="1.8" stroke-linecap="round" stroke-linejoin="round" fill="none"><path d="M22 16.92v3a2 2 0 0 1-2.18 2 19.79 19.79 0 0 1-8.63-3.07 19.5 19.5 0 0 1-6-6 19.79 19.79 0 0 1-3.07-8.67A2 2 0 0 1 4.11 2h3a2 2 0 0 1 2 1.72 12.84 12.84 0 0 0 .7 2.81 2 2 0 0 1-.45 2.11L8.09 9.91a16 16 0 0 0 6 6l1.27-1.27a2 2 0 0 1 2.11-.45 12.84 12.84 0 0 0 2.81.7A2 2 0 0 1 22 16.92z"/><path d="M15.05 5A5 5 0 0 1 19 8.95M15.05 1A9 9 0 0 1 23 8.94"/></g></svg>
<svg style="left:1603.85px;top:570.5699999999999px;" width="30.3" height="30.3" viewBox="0 0 24 24" fill="none"><g stroke="#6b6f7b" stroke-width="1.9" stroke-linecap="round" stroke-linejoin="round" fill="none"><rect x="2" y="4" width="20" height="16" rx="3"/><polyline points="22,7 12,13.5 2,7"/></g></svg>
<svg style="left:1763.9499999999998px;top:747.9300000000001px;" width="30.3" height="30.3" viewBox="0 0 24 24" fill="none"><g stroke="#6b6f7b" stroke-width="1.9" stroke-linecap="round" stroke-linejoin="round" fill="none"><rect x="2" y="4" width="20" height="16" rx="3"/><polyline points="22,7 12,13.5 2,7"/></g></svg>
<svg style="left:1792.05px;top:1191.3300000000002px;" width="30.3" height="30.3" viewBox="0 0 24 24" fill="none"><g stroke="#6b6f7b" stroke-width="1.9" stroke-linecap="round" stroke-linejoin="round" fill="none"><rect x="2" y="4" width="20" height="16" rx="3"/><polyline points="22,7 12,13.5 2,7"/></g></svg>
<svg style="left:2276.9px;top:488.89px;" width="20.2" height="20" viewBox="0 0 20.200 20" fill="none"><path d="M1.200 0h17.800a1.200 1.200 0 0 1 1.200 1.200v12.400a1.200 1.200 0 0 1-1.200 1.200h-14.200l-4.800 5v-18.600a1.200 1.200 0 0 1 1.200-1.200z" fill="#15c57a"/><rect x="5.100" y="5" width="10.200" height="1.800" fill="#d9fbe9"/><rect x="5.100" y="8.500" width="10.200" height="1.800" fill="#d9fbe9"/></svg>
<svg style="left:2276.8px;top:576.9699999999999px;" width="24.3" height="17.5" viewBox="0 0 24.300 17.500" fill="none"><rect width="24.300" height="17.500" rx="2.600" fill="#2189ee"/><polyline points="-0.500,4.600 12.150,13 24.800,4.600" stroke="#d2e9ff" stroke-width="1.700" fill="none" stroke-linejoin="round"/></svg>
<svg style="left:2272.9px;top:661.85px;" width="32" height="32" viewBox="0 0 24 24" fill="none"><path transform="matrix(-1 0 0 1 24 0)" d="M6.620 10.790c1.440 2.830 3.760 5.140 6.590 6.590l2.200-2.200c.27-.27.670-.36 1.020-.24 1.120.37 2.330.57 3.570.57.550 0 1 .45 1 1V20c0 .55-.45 1-1 1-9.390 0-17-7.610-17-17 0-.55.450-1 1-1h3.500c.55 0 1 .45 1 1 0 1.250.2 2.450.57 3.570.11.350.03.740-.25 1.020l-2.200 2.200z" fill="#1f8df0"/></svg>
<svg style="left:2276.8px;top:754.33px;" width="24.3" height="17.5" viewBox="0 0 24.300 17.500" fill="none"><rect width="24.300" height="17.500" rx="2.600" fill="#2189ee"/><polyline points="-0.500,4.600 12.150,13 24.800,4.600" stroke="#d2e9ff" stroke-width="1.700" fill="none" stroke-linejoin="round"/></svg>
<svg style="left:2276.9px;top:843.61px;" width="20.2" height="20" viewBox="0 0 20.200 20" fill="none"><path d="M1.200 0h17.800a1.200 1.200 0 0 1 1.200 1.200v12.400a1.200 1.200 0 0 1-1.200 1.200h-14.200l-4.800 5v-18.600a1.200 1.200 0 0 1 1.200-1.200z" fill="#15c57a"/><rect x="5.100" y="5" width="10.200" height="1.800" fill="#d9fbe9"/><rect x="5.100" y="8.500" width="10.200" height="1.800" fill="#d9fbe9"/></svg>
<svg style="left:2276.9px;top:1020.9699999999999px;" width="20.2" height="20" viewBox="0 0 20.200 20" fill="none"><path d="M1.200 0h17.800a1.200 1.200 0 0 1 1.200 1.200v12.400a1.200 1.200 0 0 1-1.200 1.200h-14.200l-4.800 5v-18.600a1.200 1.200 0 0 1 1.200-1.200z" fill="#15c57a"/><rect x="5.100" y="5" width="10.200" height="1.800" fill="#d9fbe9"/><rect x="5.100" y="8.500" width="10.200" height="1.800" fill="#d9fbe9"/></svg>
<svg style="left:2276.9px;top:1109.6499999999999px;" width="20.2" height="20" viewBox="0 0 20.200 20" fill="none"><path d="M1.200 0h17.800a1.200 1.200 0 0 1 1.200 1.200v12.400a1.200 1.200 0 0 1-1.200 1.200h-14.200l-4.800 5v-18.600a1.200 1.200 0 0 1 1.200-1.200z" fill="#15c57a"/><rect x="5.100" y="5" width="10.200" height="1.800" fill="#d9fbe9"/><rect x="5.100" y="8.500" width="10.200" height="1.800" fill="#d9fbe9"/></svg>
<svg style="left:559.6px;top:1104.0499999999997px;" width="28" height="28" viewBox="0 0 28 28" fill="none"><defs><clipPath id="bi"><circle cx="14" cy="14" r="13.500"/></clipPath></defs><g clip-path="url(#bi)"><rect width="28" height="28" fill="#c9d8f2"/><path d="M0 0h4v28h-4z" fill="#e3e9f5"/><path d="M5.500 9.800c0-1.500 1.500-2.300 3-2.300l2.800-2.600 2.600 2.600c1.700 0 3 .9 3 2.300z" fill="#fff"/><path d="M17.800 0h11v11.500l-2.500-3.300h-8.500z" fill="#fff"/><path d="M17.800 0.500v7.700h8.300" stroke="#8e939c" stroke-width="1.500" fill="none"/><path d="M18.200 0.800 27.500 10.500" stroke="#8e939c" stroke-width="1.400" fill="none"/><path d="M2.500 23.500 10 16.800c3-.4 7 .3 10.500 2.200l-11 10.500h-7z" fill="#56b23d"/><path d="M27.500 13.500 10.800 29h18z" fill="#fff"/><path d="M22.300 20.300l-4.800 4.500 2 3.200 6-3z" fill="#fff"/></g><path d="M4.700 4.300A13.400 13.400 0 0 0 1.200 18" stroke="#9fa4ad" stroke-width="1.300" fill="none"/><path d="M8 1.900A13.400 13.400 0 0 1 17 .9" stroke="#9fa4ad" stroke-width="1.200" fill="none"/><path d="M26.300 19.500A13.400 13.400 0 0 1 18.800 26.500" stroke="#a9adb5" stroke-width="1.500" fill="none"/></svg>
</div>
<div id="t">
<span style="left:171.00px;top:41.15px;font-size:19px;color:#2a3a80;font-weight:700;letter-spacing:-0.113px;background:linear-gradient(90deg,#2c2a6a 0,#2b3f84 18px,#2a7fc2 46px,#1fa9e2 84px);-webkit-background-clip:text;background-clip:text;color:transparent;">GOBE</span>
<span style="left:171.00px;top:61.45px;font-size:19px;color:#2a3a80;font-weight:700;letter-spacing:0.074px;background:linear-gradient(90deg,#2c2a6a 0,#2b3f84 18px,#2a7fc2 46px,#1fa9e2 84px);-webkit-background-clip:text;background-clip:text;color:transparent;">CREATIV</span>
<span style="left:66.50px;top:157.92px;font-size:19.5px;color:#111827;letter-spacing:0.842px;-webkit-text-stroke:.2px #111827;">Demo</span>
<span style="left:66.50px;top:183.17px;font-size:19.8px;color:#8b9097;letter-spacing:0.663px;">New York, NY</span>
<span style="left:66.50px;top:257.32px;font-size:24px;color:#4b5563;letter-spacing:-0.174px;">Search</span>
<span style="left:75.00px;top:345.60px;font-size:24.5px;color:#404145;letter-spacing:0.304px;">Launchpad</span>
<span style="left:75.00px;top:406.40px;font-size:24.5px;color:#404145;letter-spacing:0.238px;">Dashboard</span>
<span style="left:75.00px;top:467.20px;font-size:24.5px;color:#404145;letter-spacing:0.415px;">Conversations</span>
<span style="left:75.00px;top:528.00px;font-size:24.5px;color:#404145;letter-spacing:0.257px;">Calendars</span>
<span style="left:75.00px;top:588.80px;font-size:24.5px;color:#1e3a8a;letter-spacing:0.477px;">Contacts</span>
<span style="left:75.00px;top:649.60px;font-size:24.5px;color:#404145;letter-spacing:0.597px;">Opportunities</span>
<span style="left:75.00px;top:710.40px;font-size:24.5px;color:#404145;letter-spacing:0.472px;">Tasks</span>
<span style="left:75.00px;top:771.20px;font-size:24.5px;color:#404145;letter-spacing:0.506px;">Automation</span>
<span style="left:75.00px;top:832.00px;font-size:24.5px;color:#404145;letter-spacing:0.133px;">Payments</span>
<span style="left:75.00px;top:946.90px;font-size:24.5px;color:#404145;letter-spacing:0.602px;">Marketing</span>
<span style="left:75.00px;top:1007.70px;font-size:24.5px;color:#404145;letter-spacing:0.540px;">Memberships</span>
<span style="left:329.19px;top:469.39px;font-size:18px;color:#fff;font-weight:700;">6</span>
<span style="left:329.19px;top:712.49px;font-size:18px;color:#fff;font-weight:700;">3</span>
<span style="left:86.50px;top:1108.90px;font-size:22.6px;color:#0b0b0c;letter-spacing:1.051px;-webkit-text-stroke:.35px #0b0b0c;">Phone</span>
<span style="left:83.50px;top:1215.16px;font-size:23.6px;color:#4a4a4a;letter-spacing:0.422px;-webkit-text-stroke:.4px #4a4a4a;">Notifications</span>
<span style="left:92.00px;top:1299.37px;font-size:23px;color:#0b0b0c;letter-spacing:0.914px;-webkit-text-stroke:.35px #0b0b0c;">Profile</span>
<span style="left:33.38px;top:1297.05px;font-size:25.5px;color:#fff;">MA</span>
<span style="left:396.30px;top:31.55px;font-size:24.2px;color:#141a26;letter-spacing:0.366px;">Smart Lists</span>
<span style="left:557.00px;top:31.55px;font-size:24.2px;color:#3e4a5b;letter-spacing:0.645px;">Bulk Actions</span>
<span style="left:731.30px;top:31.55px;font-size:24.2px;color:#3e4a5b;letter-spacing:0.042px;">Restore</span>
<span style="left:851.30px;top:31.55px;font-size:24.2px;color:#3e4a5b;letter-spacing:0.534px;">Tasks</span>
<span style="left:951.00px;top:31.55px;font-size:24.2px;color:#3e4a5b;letter-spacing:0.462px;">Companies</span>
<span style="left:1112.50px;top:31.55px;font-size:24.2px;color:#3e4a5b;letter-spacing:0.411px;">Manage Smart Lists</span>
<span style="left:429.00px;top:109.65px;font-size:34.5px;color:#000;font-weight:700;letter-spacing:-0.139px;">Contacts</span>
<span style="left:397.00px;top:218.34px;font-size:23.5px;color:#1c1e21;letter-spacing:0.458px;-webkit-text-stroke:.95px #1c1e21;">All</span>
<span style="left:465.80px;top:213.52px;font-size:24px;color:#5b6a73;letter-spacing:-0.204px;-webkit-text-stroke:.85px #5b6a73;">TEST SMART LISTS</span>
<span style="left:722.50px;top:213.52px;font-size:24px;color:#5b6a73;letter-spacing:-0.078px;-webkit-text-stroke:.85px #5b6a73;">TEST A</span>
<span style="left:1320.30px;top:123.30px;font-size:24.5px;color:#a8acb2;">Quick search</span>
<span style="left:1842.60px;top:123.60px;font-size:24.5px;color:#565e6c;letter-spacing:-0.670px;">Columns</span>
<span style="left:2107.50px;top:122.90px;font-size:24.5px;color:#5d6879;letter-spacing:-0.402px;">More Filters</span>
<span style="left:2396.30px;top:123.22px;font-size:24px;color:#fff;letter-spacing:-0.227px;-webkit-text-stroke:.45px #fff;">Add Contact</span>
<span style="left:2719.30px;top:124.02px;font-size:24px;color:#fff;letter-spacing:0.050px;-webkit-text-stroke:.45px #fff;">Refresh</span>
<span style="left:2164.30px;top:319.60px;font-size:24.5px;color:#1f2937;letter-spacing:0.447px;">Total</span>
<span style="left:2226.30px;top:319.60px;font-size:24.5px;color:#1f2937;font-weight:700;letter-spacing:0.867px;">32</span>
<span style="left:2262.60px;top:319.60px;font-size:24.5px;color:#1f2937;letter-spacing:0.371px;">records</span>
<span style="left:2367.30px;top:319.60px;font-size:24.5px;color:#1f2937;font-weight:700;">1</span>
<span style="left:2385.00px;top:319.60px;font-size:24.5px;color:#1f2937;letter-spacing:0.116px;">of 2 Pages</span>
<span style="left:2547.68px;top:319.90px;font-size:24.5px;color:#1f2937;">1</span>
<span style="left:2650.50px;top:320.10px;font-size:24.5px;color:#1f2937;letter-spacing:-0.043px;">Page Size: 20</span>
<span style="left:1294.30px;top:1337.40px;font-size:24.5px;color:#1f2937;letter-spacing:0.447px;">Total</span>
<span style="left:1356.30px;top:1337.40px;font-size:24.5px;color:#1f2937;font-weight:700;letter-spacing:0.867px;">32</span>
<span style="left:1392.60px;top:1337.40px;font-size:24.5px;color:#1f2937;letter-spacing:0.371px;">records</span>
<span style="left:1497.30px;top:1337.40px;font-size:24.5px;color:#1f2937;font-weight:700;">1</span>
<span style="left:1515.00px;top:1337.40px;font-size:24.5px;color:#1f2937;letter-spacing:0.116px;">of 2 Pages</span>
<span style="left:1677.68px;top:1337.70px;font-size:24.5px;color:#1f2937;">1</span>
<span style="left:1780.50px;top:1337.90px;font-size:24.5px;color:#1f2937;letter-spacing:-0.043px;">Page Size: 20</span>
<span style="left:536.70px;top:404.88px;font-size:25px;color:#0b0b0c;font-weight:700;letter-spacing:-0.648px;">Name</span>
<span style="left:972.70px;top:404.88px;font-size:25px;color:#0b0b0c;font-weight:700;letter-spacing:-0.981px;">Phone</span>
<span style="left:1402.70px;top:404.88px;font-size:25px;color:#0b0b0c;font-weight:700;letter-spacing:-1.200px;">Email</span>
<span style="left:2045.20px;top:404.88px;font-size:25px;color:#0b0b0c;font-weight:700;letter-spacing:-0.513px;">Created</span>
<span style="left:2263.00px;top:404.88px;font-size:25px;color:#0b0b0c;font-weight:700;letter-spacing:-0.518px;">Last Activity</span>
<span style="left:2594.80px;top:404.88px;font-size:25px;color:#0b0b0c;font-weight:700;letter-spacing:-0.625px;">Tags</span>
<span style="left:628.30px;top:561.25px;font-size:25px;color:#222933;letter-spacing:0.249px;">Lwskefwlkef</span>
<span style="left:628.50px;top:589.35px;font-size:20.5px;color:#222933;">sekwnfwlekfm</span>
<span style="left:628.30px;top:661.73px;font-size:25px;color:#222933;letter-spacing:-0.379px;">Jane Doe</span>
<span style="left:628.30px;top:750.41px;font-size:25px;color:#222933;letter-spacing:-0.592px;">Cj Gross</span>
<span style="left:628.30px;top:927.76px;font-size:25px;color:#222933;letter-spacing:-0.255px;">Bunny Bridges</span>
<span style="left:628.30px;top:1093.32px;font-size:25px;color:#222933;letter-spacing:-0.055px;">Melody Yazdani Zhang</span>
<span style="left:628.50px;top:1121.43px;font-size:20.5px;color:#222933;letter-spacing:-0.261px;">Melody Yazdani Studios</span>
<span style="left:564.40px;top:486.74px;font-size:21.6px;color:#fff;">(2</span>
<span style="left:566.96px;top:573.59px;font-size:25.3px;color:#fff;">L</span>
<span style="left:560.80px;top:664.10px;font-size:21.6px;color:#fff;">JD</span>
<span style="left:557.80px;top:752.78px;font-size:21.6px;color:#fff;">CG</span>
<span style="left:566.96px;top:839.63px;font-size:25.3px;color:#6c757d;">?</span>
<span style="left:559.59px;top:930.14px;font-size:21.6px;color:#fff;">BB</span>
<span style="left:564.40px;top:1018.82px;font-size:21.6px;color:#fff;">(8</span>
<span style="left:563.46px;top:1194.35px;font-size:25.3px;color:#fff;">M</span>
<span style="left:974.60px;top:483.97px;font-size:25px;color:#222933;letter-spacing:0.038px;">(919) 237-9740</span>
<span style="left:974.60px;top:572.64px;font-size:25px;color:#222933;letter-spacing:0.517px;">(703) 488-9993</span>
<span style="left:974.60px;top:661.33px;font-size:25px;color:#222933;letter-spacing:0.324px;">(703) 537-7933</span>
<span style="left:974.60px;top:750.01px;font-size:25px;color:#222933;letter-spacing:0.145px;">(240) 350-2147</span>
<span style="left:974.60px;top:838.69px;font-size:25px;color:#222933;letter-spacing:0.467px;">8656696</span>
<span style="left:974.60px;top:927.37px;font-size:25px;color:#222933;letter-spacing:0.474px;">(703) 444-5555</span>
<span style="left:974.60px;top:1016.04px;font-size:25px;color:#222933;letter-spacing:0.245px;">(703) 895-2457</span>
<span style="left:1239.50px;top:487.41px;font-size:20.8px;color:#6b6f7b;letter-spacing:-0.107px;-webkit-text-stroke:.95px #6b6f7b;">Call</span>
<span style="left:1245.00px;top:576.09px;font-size:20.8px;color:#6b6f7b;letter-spacing:-0.107px;-webkit-text-stroke:.95px #6b6f7b;">Call</span>
<span style="left:1241.50px;top:664.77px;font-size:20.8px;color:#6b6f7b;letter-spacing:-0.107px;-webkit-text-stroke:.95px #6b6f7b;">Call</span>
<span style="left:1240.50px;top:753.45px;font-size:20.8px;color:#6b6f7b;letter-spacing:-0.107px;-webkit-text-stroke:.95px #6b6f7b;">Call</span>
<span style="left:1167.60px;top:842.13px;font-size:20.8px;color:#6b6f7b;letter-spacing:-0.107px;-webkit-text-stroke:.95px #6b6f7b;">Call</span>
<span style="left:1244.80px;top:930.81px;font-size:20.8px;color:#6b6f7b;letter-spacing:-0.107px;-webkit-text-stroke:.95px #6b6f7b;">Call</span>
<span style="left:1242.80px;top:1019.49px;font-size:20.8px;color:#6b6f7b;letter-spacing:-0.107px;-webkit-text-stroke:.95px #6b6f7b;">Call</span>
<span style="left:1403.50px;top:572.64px;font-size:25px;color:#222933;letter-spacing:0.103px;">test@test.com</span>
<span style="left:1403.50px;top:750.01px;font-size:25px;color:#222933;letter-spacing:0.026px;">cj@ascensionworldwide.com</span>
<span style="left:1403.50px;top:1193.40px;font-size:25px;color:#222933;letter-spacing:-0.166px;">myazdani@melodyyazdani.com</span>
<span style="left:1658.40px;top:575.55px;font-size:20.5px;color:#6b6f7b;letter-spacing:-0.053px;-webkit-text-stroke:.95px #6b6f7b;">Email</span>
<span style="left:1818.50px;top:752.91px;font-size:20.5px;color:#6b6f7b;letter-spacing:-0.053px;-webkit-text-stroke:.95px #6b6f7b;">Email</span>
<span style="left:1846.60px;top:1196.31px;font-size:20.5px;color:#6b6f7b;letter-spacing:-0.053px;-webkit-text-stroke:.95px #6b6f7b;">Email</span>
<span style="left:2045.60px;top:471.90px;font-size:22px;color:#222933;letter-spacing:0.63px;">Jan 16 2024</span>
<span style="left:2052.30px;top:500.05px;font-size:22.3px;color:#3182ce;letter-spacing:0.95px;">03:02 AM<span style="position:static;font-size:17.8px;letter-spacing:0;margin-left:2.1px"> (-12)</span></span>
<span style="left:2045.60px;top:560.58px;font-size:22px;color:#222933;letter-spacing:0.83px;">Mar 27 2023</span>
<span style="left:2052.30px;top:588.73px;font-size:22.3px;color:#3182ce;letter-spacing:0.95px;">03:57 AM<span style="position:static;font-size:17.8px;letter-spacing:0;margin-left:2.1px"> (-12)</span></span>
<span style="left:2045.60px;top:649.26px;font-size:22px;color:#222933;letter-spacing:0.83px;">Feb 07 2023</span>
<span style="left:2052.30px;top:677.41px;font-size:22.3px;color:#3182ce;letter-spacing:0.95px;">06:38 AM<span style="position:static;font-size:17.8px;letter-spacing:0;margin-left:2.1px"> (-12)</span></span>
<span style="left:2045.60px;top:737.94px;font-size:22px;color:#222933;letter-spacing:0.83px;">Jan 23 2023</span>
<span style="left:2052.30px;top:766.09px;font-size:22.3px;color:#3182ce;letter-spacing:0.95px;">03:09 AM<span style="position:static;font-size:17.8px;letter-spacing:0;margin-left:2.1px"> (-12)</span></span>
<span style="left:2045.60px;top:826.62px;font-size:22px;color:#222933;letter-spacing:0.83px;">Oct 07 2022</span>
<span style="left:2052.30px;top:854.77px;font-size:22.3px;color:#3182ce;letter-spacing:0.95px;">03:43 AM<span style="position:static;font-size:17.8px;letter-spacing:0;margin-left:2.1px"> (-12)</span></span>
<span style="left:2045.60px;top:915.30px;font-size:22px;color:#222933;letter-spacing:0.83px;">Jul 28 2022</span>
<span style="left:2052.30px;top:943.45px;font-size:22.3px;color:#3182ce;letter-spacing:0.49px;">04:31 AM<span style="position:static;font-size:17.8px;letter-spacing:0;margin-left:2.1px"> (-12)</span></span>
<span style="left:2045.60px;top:1003.98px;font-size:22px;color:#222933;letter-spacing:0.83px;">Jul 27 2022</span>
<span style="left:2052.30px;top:1032.13px;font-size:22.3px;color:#3182ce;letter-spacing:0.49px;">05:16 AM<span style="position:static;font-size:17.8px;letter-spacing:0;margin-left:2.1px"> (-12)</span></span>
<span style="left:2045.60px;top:1092.66px;font-size:22px;color:#222933;letter-spacing:0.63px;">Jul 14 2022</span>
<span style="left:2052.30px;top:1120.81px;font-size:22.3px;color:#3182ce;letter-spacing:0.03px;">12:15 AM<span style="position:static;font-size:17.8px;letter-spacing:0;margin-left:2.1px"> (-12)</span></span>
<span style="left:2045.60px;top:1181.34px;font-size:22px;color:#222933;letter-spacing:0.43px;">Jul 11 2022</span>
<span style="left:2052.30px;top:1209.49px;font-size:22.3px;color:#3182ce;letter-spacing:0.95px;">08:40 AM<span style="position:static;font-size:17.8px;letter-spacing:0;margin-left:2.1px"> (-12)</span></span>
<span style="left:2311.50px;top:484.19px;font-size:24.5px;color:#222933;letter-spacing:-0.248px;">1 year ago</span>
<span style="left:2315.20px;top:572.87px;font-size:24.5px;color:#222933;letter-spacing:0.070px;">2 years ago</span>
<span style="left:2315.20px;top:661.55px;font-size:24.5px;color:#222933;letter-spacing:0.070px;">2 years ago</span>
<span style="left:2315.20px;top:750.23px;font-size:24.5px;color:#222933;letter-spacing:0.070px;">2 years ago</span>
<span style="left:2311.50px;top:838.91px;font-size:24.5px;color:#222933;letter-spacing:0.070px;">2 years ago</span>
<span style="left:2311.50px;top:1016.27px;font-size:24.5px;color:#222933;letter-spacing:0.070px;">2 years ago</span>
<span style="left:2311.50px;top:1104.95px;font-size:24.5px;color:#222933;letter-spacing:0.070px;">2 years ago</span>
</div>
<div id="o">
<div style="position:absolute;left:0;top:1022.7px;width:368px;height:60px;background:#fff"></div>
<div style="position:absolute;left:379px;top:1268.3px;width:2501px;height:34.5px;background:#fff"></div>
<div style="position:absolute;left:378.5px;top:1302.5px;width:2501.5px;height:1.4px;background:#e4e6ea"></div>
<div style="position:absolute;left:2604px;top:1267.8px;width:170px;height:1.2px;background:#e6e9ef"></div>
<div style="position:absolute;left:332px;top:1274.5px;width:58px;height:57.5px;background:#fff;border-radius:13px;box-shadow:0 2px 10px rgba(16,24,40,.13),0 0 2px rgba(16,24,40,.10)"></div>
<svg style="position:absolute;left:350px;top:1288.5px" width="24" height="30" viewBox="0 0 24 30" fill="none"><polyline points="17,4.500 6,14.700 17,25" stroke="#0b0b0c" stroke-width="3.600" stroke-linecap="round" stroke-linejoin="round"/></svg>
<div style="position:absolute;left:2765px;top:1251.7px;width:81.400px;height:81.400px;border-radius:50%;background:#188bd3;box-shadow:0 3px 32px rgba(16,24,40,.13)"></div>
<svg style="position:absolute;left:2787px;top:1270.3px" width="38" height="43.5" viewBox="0 0 40 44" preserveAspectRatio="none" fill="none"><path d="M7.500 2h24a6 6 0 0 1 6 6v34l-8.500-7h-21.500a6 6 0 0 1-6-6v-21a6 6 0 0 1 6-6z" fill="#fff"/></svg>
<div style="position:absolute;left:553.5px;top:-20px;width:145px;height:145px;border-radius:50%;background:rgba(43,115,186,.40)"></div>
<div style="position:absolute;left:591.5px;top:18px;width:69px;height:69px;border-radius:50%;background:#2a72b8"></div>
</div>
</div>
</body></html>
